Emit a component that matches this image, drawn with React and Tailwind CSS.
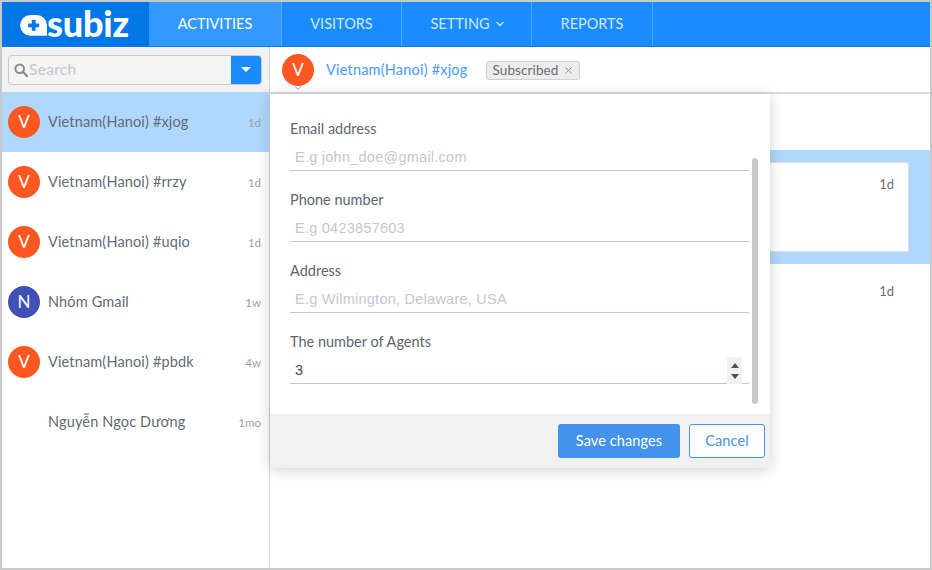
import React from 'react';
import { ChevronDown, X } from 'lucide-react';

const conversations = [
  { name: 'Vietnam(Hanoi) #xjog', time: '1d', letter: 'V', active: true },
  { name: 'Vietnam(Hanoi) #rrzy', time: '1d', letter: 'V' },
  { name: 'Vietnam(Hanoi) #uqio', time: '1d', letter: 'V' },
  { name: 'Nhóm Gmail', time: '1w', letter: 'N', color: 'bg-[#3f51b5]' },
  { name: 'Vietnam(Hanoi) #pbdk', time: '4w', letter: 'V' },
  { name: 'Nguyễn Ngọc Dương', time: '1mo' },
];

const fields = [
  { label: 'Email address', placeholder: 'E.g john_doe@gmail.com' },
  { label: 'Phone number', placeholder: 'E.g 0423857603' },
  { label: 'Address', placeholder: 'E.g Wilmington, Delaware, USA' },
];

function Avatar({ letter, color }) {
  if (!letter) return <div className="w-8 h-8 shrink-0" />;
  return (
    <div className={`w-8 h-8 shrink-0 rounded-full text-white flex items-center justify-center text-[17px] ${color || 'bg-[#ff5722]'}`}>
      {letter}
    </div>
  );
}

function Logo() {
  return (
    <div className="w-[147px] shrink-0 bg-[#0077e6] flex items-center pl-[18px] text-white">
      <svg width="29" height="21" viewBox="0 0 29 21" className="mt-[3px] shrink-0">
        <path d="M10.5 0h6A10.500 10.500 0 0 1 27 10.500V20a.8.8 0 0 1-.8.8H10.500A10.400 10.400 0 0 1 10.500 0z" fill="#fff" />
        <path d="M11.800 5h3.800v3.600h3.600v3.600h-3.600v3.600h-3.800v-3.600H8.200V8.600h3.600z" fill="#0077e6" />
      </svg>
      <span className="text-[36px] leading-none font-black tracking-[-0.2px] -ml-[2px] -mt-[3px]">subiz</span>
    </div>
  );
}

function NavTab({ label, width, active, caret }) {
  return (
    <div
      style={{ width }}
      className={`shrink-0 flex items-center justify-center gap-1 border-r border-[#4dabff] text-[14.5px] ${active ? 'bg-[#3399ff] text-white' : 'text-[#d0e7ff]'}`}
    >
      {label}
      {caret && <ChevronDown size={12} strokeWidth={2.5} className="-mr-[3px]" />}
    </div>
  );
}

function ConversationRow({ item }) {
  return (
    <div className={`h-[60px] flex items-center pl-[6px] pr-2 ${item.active ? 'bg-[#b0d7fd]' : ''}`}>
      <Avatar letter={item.letter} color={item.color} />
      <div className="ml-2 flex-1 text-[14.5px] tracking-[0.15px] text-[#5f6b76] truncate">{item.name}</div>
      <div className="text-[11.5px] text-[#9aa2a9] mt-[2px]">{item.time}</div>
    </div>
  );
}

function Field({ label, placeholder, value, spinner }) {
  return (
    <div className="h-[71px] relative">
      <div className="text-[14.5px] leading-5 text-[#5c6670]">{label}</div>
      <div className="mt-[7px] h-[25px] border-b border-[#bcc6d2] pl-[5px] flex items-center font-['Liberation_Sans',sans-serif] text-[14.5px] tracking-[0.25px]">
        {value ? <span className="text-[#4a4f55]">{value}</span> : <span className="text-[#c3c7d0]">{placeholder}</span>}
      </div>
      {spinner && (
        <div className="absolute right-[7px] top-[25px] w-[15px] h-[27px] bg-[#f1f1f1] flex flex-col items-center justify-center gap-[6px]">
          <div className="w-0 h-0 border-x-[4px] border-x-transparent border-b-[5px] border-b-[#505050]" />
          <div className="w-0 h-0 border-x-[4px] border-x-transparent border-t-[5px] border-t-[#505050]" />
        </div>
      )}
    </div>
  );
}

export default function App() {
  return (
    <div className="w-[932px] h-[570px] bg-white border-2 border-[#c9c9c9] flex flex-col overflow-hidden relative font-['Lato',sans-serif]">
      <header className="h-[45px] shrink-0 bg-[#1a8cff] border-b border-[#0a78e6] flex">
        <Logo />
        <NavTab label="ACTIVITIES" width={133} active />
        <NavTab label="VISITORS" width={120} />
        <NavTab label="SETTING" width={130} caret />
        <NavTab label="REPORTS" width={121} />
      </header>

      <div className="flex-1 flex min-h-0">
        <aside className="w-[268px] shrink-0 border-r border-[#d5d5d5] flex flex-col">
          <div className="h-[45px] shrink-0 bg-[#f2f2f2] flex items-center pl-[6px] pr-[7px]">
            <div className="flex-1 h-[30px] flex rounded-[4px] border border-[#c8c8c8] bg-[#f5f5f5] overflow-hidden">
              <div className="flex-1 flex items-center pl-[5px] gap-[1px] text-[15.5px] tracking-[0.3px] text-[#c0c4cc]">
                <svg width="14" height="14" viewBox="0 0 14 14" fill="none" stroke="#8a8a8a" strokeWidth="2">
                  <circle cx="5.7" cy="5.7" r="4.3" />
                  <path d="M9 9l4 4" strokeLinecap="round" strokeWidth="2.4" />
                </svg>
                Search
              </div>
              <div className="w-[30px] bg-[#1a8cff] flex items-center justify-center">
                <div className="w-0 h-0 border-x-[5px] border-x-transparent border-t-[5px] border-t-white" />
              </div>
            </div>
          </div>
          {conversations.map((item) => (
            <ConversationRow key={item.name} item={item} />
          ))}
        </aside>

        <main className="flex-1 min-w-0 flex flex-col">
          <div className="h-[47px] shrink-0 flex items-center pl-3 border-b-2 border-[#dcdcdc] relative">
            <Avatar letter="V" />
            <ChevronDown size={12} strokeWidth={1.6} className="absolute z-10 left-[22px] top-[35px] text-[#4393eb]" />
            <span className="ml-3 text-[14.5px] tracking-[0.2px] text-[#4a9aff]">Vietnam(Hanoi) #xjog</span>
            <span className="ml-[19px] mt-[2px] h-[19px] px-[5px] flex items-center gap-[5px] rounded-[3px] border border-[#cfcfcf] bg-[#ececec] text-[13.5px] tracking-[0.1px] text-[#6a6f75]">
              Subscribed
              <X size={11} className="text-[#85898d]" />
            </span>
          </div>
          <div className="h-[56px] shrink-0" />
          <div className="h-[114px] shrink-0 bg-[#b0d7fd] flex items-start pt-3 pl-10 pr-[21px]">
            <div className="flex-1 h-[90px] bg-white border border-[#dedede] rounded-[2px] text-right pr-[14px] pt-[12px] text-[13px] text-[#6a6f75]">1d</div>
          </div>
          <div className="text-right pr-[36px] pt-[18px] text-[13px] text-[#6a6f75]">1d</div>
        </main>
      </div>

      {/* settings dropdown, lies over the conversation */}
      <div className="absolute left-[268px] top-[92px] w-[500px] h-[374px] bg-white shadow-[0_2px_14px_rgba(0,0,0,0.18)] flex flex-col">
        <div className="flex-1 relative pl-5 pr-[21px] pt-[25px]">
          {fields.map((f) => (
            <Field key={f.label} label={f.label} placeholder={f.placeholder} />
          ))}
          <Field label="The number of Agents" value="3" spinner />
          <div className="absolute right-[12px] top-[64px] w-[6px] h-[246px] bg-[#c9c9c9] rounded-[3px]" />
        </div>
        <div className="h-[54px] shrink-0 bg-[#f1f1f1] flex items-center justify-end gap-[9px] pr-[5px] text-[14.5px] tracking-[0.1px]">
          <button className="w-[122px] h-[34px] bg-[#4393eb] text-white rounded-[3px]">Save changes</button>
          <button className="w-[76px] h-[34px] bg-white text-[#4393eb] border border-[#4393eb] rounded-[3px]">Cancel</button>
        </div>
      </div>
    </div>
  );
}
